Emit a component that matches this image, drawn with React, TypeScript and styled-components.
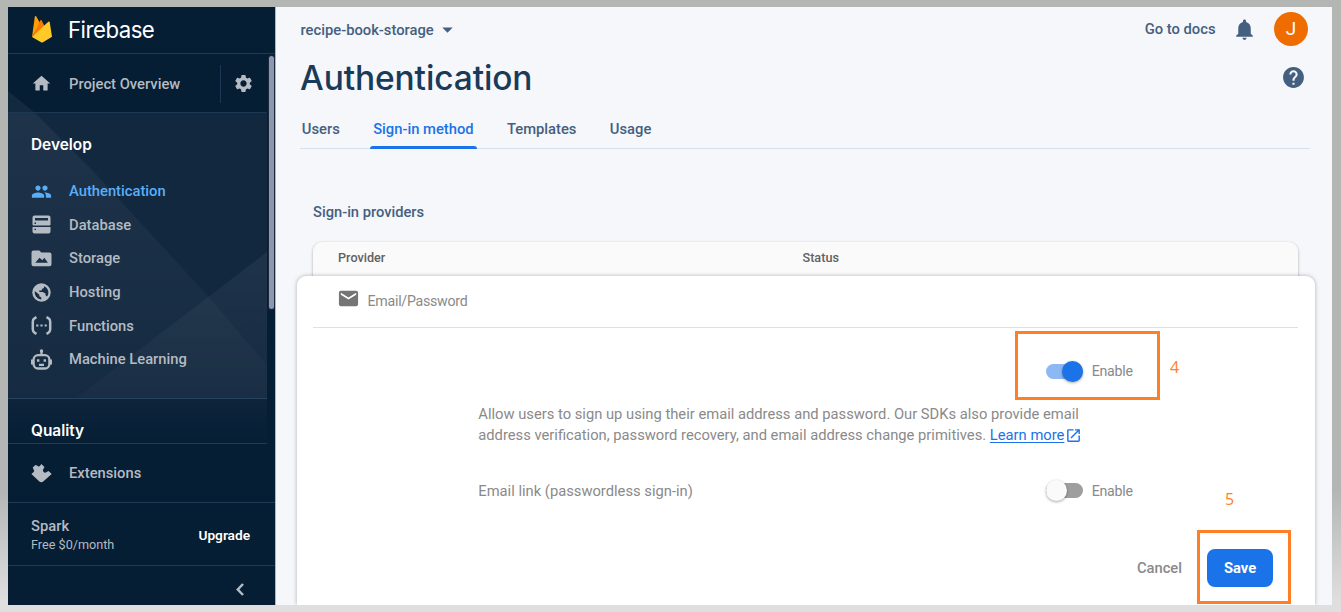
import React from "react";
import styled, { createGlobalStyle } from "styled-components";
import {
  MdHome, MdSettings, MdPeople, MdMail, MdOpenInNew, MdHelp,
  MdNotifications, MdArrowDropDown,
} from "react-icons/md";

const GlobalStyle = createGlobalStyle`
  * { box-sizing: border-box; }
  body { margin: 0; font-family: Roboto, "Liberation Sans", sans-serif; }
`;

const brand = 'Inter, "Open Sans", sans-serif';

const Backdrop = styled.div`
  width: 1341px;
  height: 612px;
  padding: 7px 9px 7px 8px;
  overflow: hidden;
  background: linear-gradient(#b4b6b4 0, #b4b6b5 490px, #dedede 600px, #dfdfdf 100%);
`;

const Window = styled.div`
  position: relative;
  display: flex;
  width: 1324px;
  height: 598px;
  background: #f5f7fa;
  overflow: hidden;
`;

const Sidebar = styled.aside`
  display: flex;
  flex-direction: column;
  width: 268px;
  border-right: 1px solid #a9b7c6;
  background: #051e34;
  color: #b4bbc2;
`;

const BrandBar = styled.div`
  display: flex;
  align-items: center;
  height: 47px;
  padding: 0 0 2px 23px;
  gap: 15px;
  border-bottom: 1px solid #1d3a56;
`;

const BrandName = styled.span`
  padding-top: 2px;
  font: 400 22.2px/24px ${brand};
  letter-spacing: -0.5px;
  color: #fff;
`;

const Scroller = styled.div`
  display: flex;
  height: 390px;
`;

const ScrollContent = styled.div`
  display: flex;
  flex-direction: column;
  position: relative;
  width: 259px;
  isolation: isolate;
`;

const Facets = styled.svg`
  position: absolute;
  left: 0;
  top: 0;
  z-index: -1;
`;

const ScrollTrack = styled.div`
  width: 8px;
  padding: 2px 1px 0 2px;
  background: #051e34;
`;

const ScrollThumb = styled.div`
  height: 253px;
  width: 5px;
  border-radius: 3px;
  background: #8a98b0;
  box-shadow: 0 0 0 1px #1e2838;
`;

const OverviewRow = styled.div`
  display: flex;
  align-items: center;
  height: 59px;
  padding-top: 1px;
  border-bottom: 1px solid #1c3853;
`;

const NavRow = styled.div<{ $active?: boolean; $height?: string }>`
  display: flex;
  align-items: center;
  gap: 17px;
  height: ${(p) => p.$height ?? "33.7px"};
  padding-left: 23px;
  font-size: 14.75px;
  font-weight: 500;
  color: ${(p) => (p.$active ? "#5aaef8" : "#b4bbc2")};
  svg { flex: none; width: 21px; height: 21px; }
`;

const OverviewLink = styled(NavRow)`
  width: 212px;
`;

const SettingsCell = styled.div`
  display: flex;
  align-items: center;
  justify-content: center;
  width: 46px;
  height: 38px;
  border-left: 1px solid #1c3853;
  svg { width: 21px; height: 21px; }
`;

const Develop = styled.section`
  height: 286px;
  border-bottom: 1px solid #27425d;
`;

const SectionTitle = styled.h2`
  margin: 0;
  padding: 21px 0 0 23px;
  font: 600 15.4px/22px ${brand};
  letter-spacing: 0;
  color: #fff;
`;

const NavList = styled.nav`
  padding-top: 18.2px;
`;

const Quality = styled.section`
  flex: 1;
  border-bottom: 1px solid #1f3b56;
`;

const ExtensionsRow = styled.div`
  height: 59px;
  border-bottom: 1px solid #1f3b56;
`;

const Plan = styled.div`
  display: flex;
  align-items: center;
  justify-content: space-between;
  height: 63px;
  padding: 1px 25px 0 23px;
  border-bottom: 1px solid #1f3b56;
`;

const PlanName = styled.div`
  font-size: 14.75px;
  font-weight: 500;
  line-height: 20px;
`;

const PlanPrice = styled.div`
  font-size: 12.65px;
  line-height: 18px;
`;

const Upgrade = styled.span`
  font-size: 13.7px;
  font-weight: 600;
  color: #fff;
`;

const Collapse = styled.div`
  display: flex;
  flex: 1;
  align-items: center;
  justify-content: flex-end;
  padding: 8px 31.5px 0 0;
`;

const Main = styled.main`
  display: flex;
  flex-direction: column;
  flex: 1;
  color: #455f80;
`;

const TopBar = styled.header`
  display: flex;
  align-items: center;
  height: 45px;
  padding: 0 24px 0 24.5px;
  font-size: 14.75px;
  font-weight: 500;
`;

const ProjectName = styled.div`
  display: flex;
  align-items: center;
  flex: 1;
  gap: 1px;
  svg { width: 25px; height: 25px; }
`;

const DocsLink = styled.span`
  padding-bottom: 1px;
`;

const Bell = styled(MdNotifications)`
  width: 25px;
  height: 25px;
  margin: 0 17px 0 16.5px;
`;

const Avatar = styled.div`
  width: 34px;
  height: 34px;
  margin-top: -1px;
  border-radius: 50%;
  background: #ef6c00;
  color: #fff;
  font: 400 19px/33px Roboto, sans-serif;
  text-align: center;
`;

const TitleBar = styled.div`
  display: flex;
  align-items: center;
  justify-content: space-between;
  height: 52px;
  padding: 0 26px 0 24px;
  svg { width: 25px; height: 25px; margin-top: -1px; }
`;

const Title = styled.h1`
  margin: 0;
  font: 450 33.5px/44px ${brand};
  letter-spacing: -0.12px;
  color: #1a3a5a;
`;

const Tabs = styled.div`
  display: flex;
  gap: 27.4px;
  height: 45px;
  margin: 0 22px 0 24px;
  border-bottom: 1px solid #d5e0ec;
`;

const Tab = styled.div<{ $active?: boolean }>`
  position: relative;
  padding: 15px 3px 0;
  font-size: 14.75px;
  font-weight: 500;
  line-height: 20px;
  color: ${(p) => (p.$active ? "#1a73e8" : "#455f80")};
  &:first-child { padding-left: 1.8px; }
  &::after {
    content: "";
    display: ${(p) => (p.$active ? "block" : "none")};
    position: absolute;
    inset: auto 0 -1px 0;
    height: 3px;
    border-radius: 3px 3px 0 0;
    background: #1a73e8;
  }
`;

const SectionLabel = styled.div`
  padding: 53px 0 0 37px;
  font-size: 14.7px;
  font-weight: 500;
  line-height: 20px;
`;

const TableHead = styled.div`
  display: flex;
  align-items: center;
  height: 34px;
  margin: 20px 34px 0 37px;
  padding: 0 0 3px 25px;
  border-radius: 9px 9px 0 0;
  background: #fafafa;
  box-shadow: 0 1px 3px rgba(0, 0, 0, 0.32);
  font-size: 12.65px;
  font-weight: 500;
  color: #616161;
`;

const HeadCell = styled.div<{ $width?: number }>`
  width: ${(p) => (p.$width ? `${p.$width}px` : "auto")};
`;

const Card = styled.section`
  position: relative;
  display: flex;
  flex-direction: column;
  flex: 1;
  margin: 0 17px 0 20.5px;
  padding: 0 17px 0 16.5px;
  border-radius: 9px 9px 0 0;
  background: #fff;
  box-shadow: 0 0 4px rgba(0, 0, 0, 0.3);
  color: #8a8a8a;
  font-size: 14.74px;
`;

const ProviderRow = styled.div`
  display: flex;
  align-items: center;
  height: 52px;
  padding: 0 0 2px 24px;
  gap: 7.5px;
  border-bottom: 1px solid #e0e0e0;
  font-size: 14.2px;
  letter-spacing: -0.26px;
  svg { width: 23px; height: 23px; margin-top: -4px; color: #757575; }
`;

const Settings = styled.div`
  width: 654.5px;
  margin-left: 165.3px;
`;

const EnableRow = styled.div<{ $height: number; $offset?: number }>`
  display: flex;
  align-items: center;
  justify-content: space-between;
  height: ${(p) => p.$height}px;
  padding-top: ${(p) => p.$offset ?? 0}px;
`;

const ToggleField = styled.div`
  display: flex;
  align-items: center;
  gap: 9px;
  margin-left: auto;
  font-size: 14.2px;
  letter-spacing: -0.24px;
`;

const Switch = styled.span<{ $on?: boolean }>`
  display: flex;
  align-items: center;
  justify-content: ${(p) => (p.$on ? "flex-end" : "flex-start")};
  width: 37px;
  height: 15px;
  border-radius: 8px;
  background: ${(p) => (p.$on ? "#8cb9f3" : "#9e9e9e")};
  &::before {
    content: "";
    width: 21px;
    height: 21px;
    border-radius: 50%;
    background: ${(p) => (p.$on ? "#1a73e8" : "#fafafa")};
    box-shadow: 0 1px 3px rgba(0, 0, 0, 0.35);
  }
`;

const Description = styled.p`
  margin: 0;
  line-height: 21.3px;
  white-space: nowrap;
`;

const LearnMore = styled.a`
  color: #1a73e8;
  text-decoration: underline;
  text-underline-offset: 2px;
`;

const ExternalIcon = styled(MdOpenInNew)`
  width: 17px;
  height: 17px;
  margin-left: 1px;
  vertical-align: -4px;
  color: #1a73e8;
`;

const Actions = styled.div`
  display: flex;
  align-items: center;
  justify-content: flex-end;
  gap: 25px;
  margin-top: 14px;
  padding-right: 25px;
  font-weight: 500;
`;

const SaveButton = styled.button`
  width: 66px;
  height: 38px;
  padding: 0;
  border: 0;
  border-radius: 8px;
  background: #1a73e8;
  color: #fff;
  font: 700 14.75px Roboto, sans-serif;
`;

const Callout = styled.div<{ $x: number; $y: number; $w: number; $h: number }>`
  position: absolute;
  left: ${(p) => p.$x}px;
  top: ${(p) => p.$y}px;
  width: ${(p) => p.$w}px;
  height: ${(p) => p.$h}px;
  border: 3px solid #ff7f27;
`;

const CalloutNumber = styled.span<{ $x: number; $y: number }>`
  position: absolute;
  left: ${(p) => p.$x}px;
  top: ${(p) => p.$y}px;
  font: 400 16px/20px "Open Sans", sans-serif;
  color: #ff7f27;
`;

const FirebaseLogo = () => (
  <svg width="22" height="29" viewBox="0 0 22 29">
    <path d="M1 22 3.800 1.800c.1-.9 1-1.100 1.500-.3L9.500 9z" fill="#ffa000" />
    <path d="M1 22 9.300 5.500c.3-.6 1.100-.6 1.400 0L14.500 13z" fill="#f57c00" />
    <path d="M1 22 17.300 6.700c.5-.5 1.300-.2 1.400.4L21 21.800l-9 5.400c-.6.4-1.300.4-1.900 0z" fill="#ffca28" />
  </svg>
);

const DatabaseIcon = () => (
  <svg viewBox="0 0 21 21" fill="currentColor">
    <path fillRule="evenodd" d="M3.500 1.500h14a2 2 0 0 1 2 2v7a1 1 0 0 1-1 1h-16a1 1 0 0 1-1-1v-7a2 2 0 0 1 2-2zM4 4v2.500h13V4zM3.500 8.600v1.300h1.500V8.600z" />
    <path fillRule="evenodd" d="M1.500 13h18v4.500a2 2 0 0 1-2 2h-14a2 2 0 0 1-2-2zM3.500 14.700V16h1.500v-1.300z" />
  </svg>
);

const StorageIcon = () => (
  <svg viewBox="0 0 21 21" fill="currentColor">
    <path fillRule="evenodd" d="M2.500 2.500h5.800l2 2h8.200a2 2 0 0 1 2 2v9.800a2 2 0 0 1-2 2h-16a2 2 0 0 1-2-2V4.500a2 2 0 0 1 2-2zM4.300 14.700h12.600l-3.600-5-1.900 2.600-2.900-2.600z" />
  </svg>
);

const HostingIcon = () => (
  <svg viewBox="0 0 21 21">
    <circle cx="10.500" cy="10.500" r="9.200" fill="currentColor" />
    <path d="M3.800 9 8.300 12.700v1.500l2 1.400v1.800A7 7 0 0 1 3.800 9z" fill="#162c43" />
    <path d="M13 4.200a7 7 0 0 1 4.400 6.200c0 1.700-.6 3-1.400 4l-1.500-1.200v-1.800l-2.800-1.300H8.300V8.500h2.200l.8-1.800 1.700-.6z" fill="#162c43" />
  </svg>
);

const FunctionsIcon = () => (
  <svg viewBox="0 0 21 21" fill="none" stroke="currentColor" strokeWidth="2.500">
    <path d="M5.500 2.200 3.800 3.100A4 4 0 0 0 1.800 6.500v8a4 4 0 0 0 2 3.400l1.700.9M15.500 2.200l1.700.9a4 4 0 0 1 2 3.400v8a4 4 0 0 1-2 3.400l-1.700.9" />
    <path d="M5.200 10.500h2.200M9.400 10.500h2.200M13.600 10.500h2.200" strokeWidth="2.200" />
  </svg>
);

const RobotIcon = () => (
  <svg viewBox="0 0 21 21" fill="none" stroke="currentColor" strokeWidth="2.300">
    <rect x="2.600" y="6.200" width="15.800" height="13.300" rx="4.500" />
    <path d="M10.500 6V2M1 10.500v5M20 10.500v5" />
    <circle cx="10.500" cy="1.900" r="1.700" fill="currentColor" stroke="none" />
    <path d="M6 11.500h2.400M12.600 11.500H15M8 15.800h5" />
  </svg>
);

const ExtensionsIcon = () => (
  <svg viewBox="0 0 21 21" fill="currentColor">
    <path d="M1.700 4.600 4.400 1.900l1.700.7a2 2 0 0 0 3 .1l1.200-1.600 3.200 3-1.100 2a2.200 2.200 0 0 0 3.200 3l1.900-1.200 3.200 3-8.200 7.300a3.200 3.200 0 0 1-4.400 0L.4 11l2-1.700a2 2 0 0 0 .2-2.900z" />
  </svg>
);

const CollapseIcon = () => (
  <svg width="8" height="13" viewBox="0 0 8 13" fill="none" stroke="currentColor" strokeWidth="2.500">
    <path d="M7 1 1.800 6.500 7 12" />
  </svg>
);

const navItems = [
  { label: "Authentication", icon: <MdPeople />, active: true },
  { label: "Database", icon: <DatabaseIcon /> },
  { label: "Storage", icon: <StorageIcon /> },
  { label: "Hosting", icon: <HostingIcon /> },
  { label: "Functions", icon: <FunctionsIcon /> },
  { label: "Machine Learning", icon: <RobotIcon /> },
];

export default function App() {
  return (
    <>
      <GlobalStyle />
      <Backdrop>
        <Window>
          <Sidebar>
            <BrandBar>
              <FirebaseLogo />
              <BrandName>Firebase</BrandName>
            </BrandBar>
            <Scroller>
              <ScrollContent>
                <Facets width="259" height="390">
                  <defs>
                    <linearGradient id="fade" x1="0" y1="0" x2="0" y2="1">
                      <stop offset="0" stopColor="#0d243b" />
                      <stop offset="1" stopColor="#061f35" />
                    </linearGradient>
                    <linearGradient id="facet" x1="0" y1="0" x2="0" y2="1">
                      <stop offset="0" stopColor="#fff" stopOpacity="0.055" />
                      <stop offset="1" stopColor="#fff" stopOpacity="0.015" />
                    </linearGradient>
                  </defs>
                  <rect y="58" width="259" height="287" fill="#12283f" />
                  <path d="M0 37 L27 59 L84 116 L199 241 L259 311 V345 H0z" fill="url(#facet)" />
                  <path d="M259 198 L67 345 H259z" fill="url(#facet)" />
                  <rect y="345" width="259" height="45" fill="url(#fade)" />
                </Facets>
                <OverviewRow>
                  <OverviewLink>
                    <MdHome />
                    Project Overview
                  </OverviewLink>
                  <SettingsCell><MdSettings /></SettingsCell>
                </OverviewRow>
                <Develop>
                  <SectionTitle>Develop</SectionTitle>
                  <NavList>
                    {navItems.map((item) => (
                      <NavRow key={item.label} $active={item.active}>
                        {item.icon}
                        {item.label}
                      </NavRow>
                    ))}
                  </NavList>
                </Develop>
                <Quality>
                  <SectionTitle>Quality</SectionTitle>
                </Quality>
              </ScrollContent>
              <ScrollTrack><ScrollThumb /></ScrollTrack>
            </Scroller>
            <ExtensionsRow>
              <NavRow $height="58px"><ExtensionsIcon />Extensions</NavRow>
            </ExtensionsRow>
            <Plan>
              <div>
                <PlanName>Spark</PlanName>
                <PlanPrice>Free $0/month</PlanPrice>
              </div>
              <Upgrade>Upgrade</Upgrade>
            </Plan>
            <Collapse><CollapseIcon /></Collapse>
          </Sidebar>
          <Main>
            <TopBar>
              <ProjectName>recipe-book-storage<MdArrowDropDown /></ProjectName>
              <DocsLink>Go to docs</DocsLink>
              <Bell />
              <Avatar>J</Avatar>
            </TopBar>
            <TitleBar>
              <Title>Authentication</Title>
              <MdHelp />
            </TitleBar>
            <Tabs>
              <Tab>Users</Tab>
              <Tab $active>Sign-in method</Tab>
              <Tab>Templates</Tab>
              <Tab>Usage</Tab>
            </Tabs>
            <SectionLabel>Sign-in providers</SectionLabel>
            <TableHead>
              <HeadCell $width={464.5}>Provider</HeadCell>
              <HeadCell>Status</HeadCell>
            </TableHead>
            <Card>
              <ProviderRow><MdMail />Email/Password</ProviderRow>
              <Settings>
                <EnableRow $height={76} $offset={10}>
                  <ToggleField><Switch $on />Enable</ToggleField>
                </EnableRow>
                <Description>
                  Allow users to sign up using their email address and password. Our SDKs also provide email<br />
                  address verification, password recovery, and email address change primitives. <LearnMore>Learn more</LearnMore><ExternalIcon />
                </Description>
                <EnableRow $height={88}>
                  Email link (passwordless sign-in)
                  <ToggleField><Switch />Enable</ToggleField>
                </EnableRow>
              </Settings>
              <Actions>
                Cancel
                <SaveButton>Save</SaveButton>
              </Actions>
            </Card>
          </Main>
          <Callout $x={1007} $y={324} $w={145} $h={69} />
          <CalloutNumber $x={1162} $y={350}>4</CalloutNumber>
          <Callout $x={1189} $y={523} $w={94} $h={74} />
          <CalloutNumber $x={1217} $y={482}>5</CalloutNumber>
        </Window>
      </Backdrop>
    </>
  );
}
